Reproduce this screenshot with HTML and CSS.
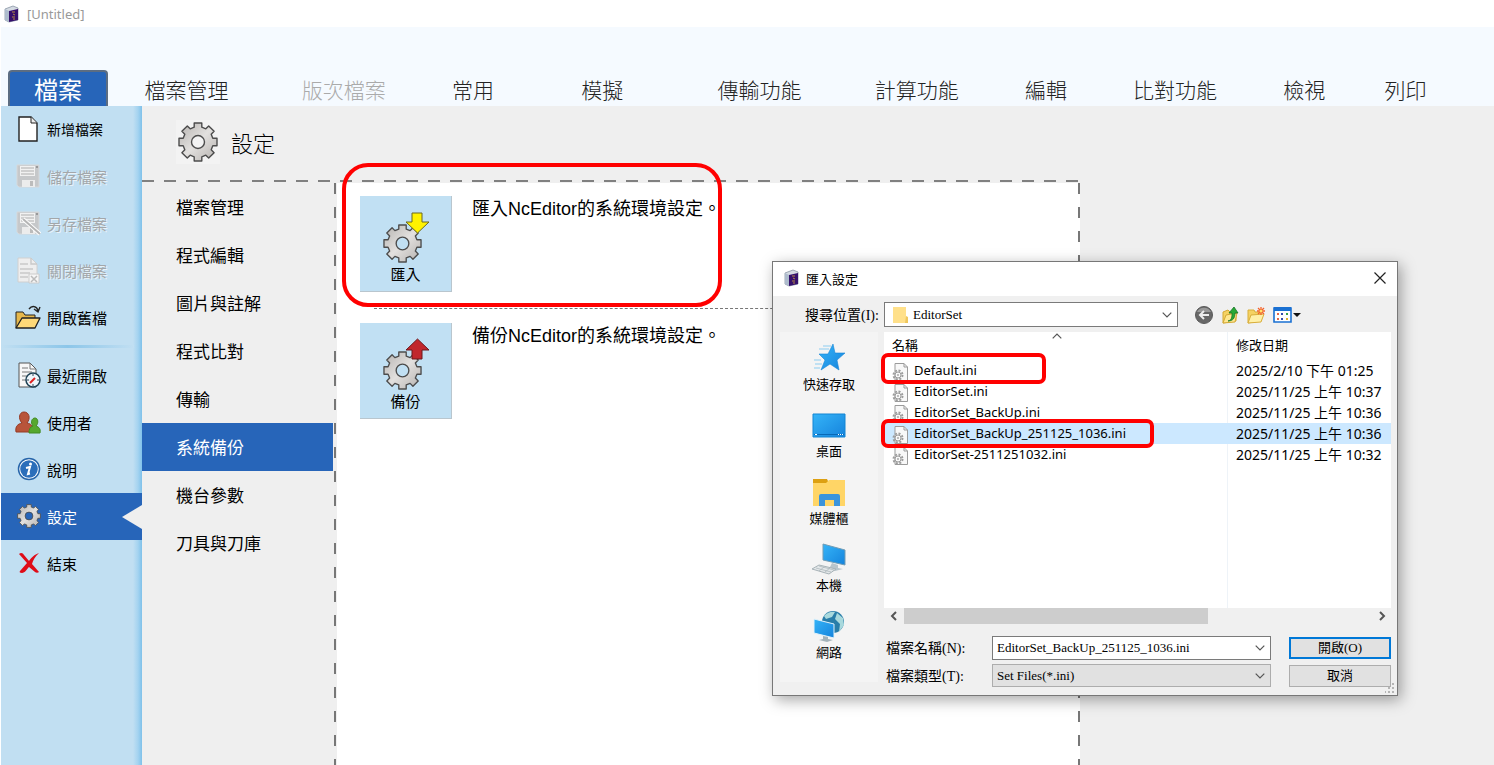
FILE: index.html
```html
<!DOCTYPE html>
<html lang="zh-Hant">
<head>
    <meta charset="UTF-8">
    <meta name="viewport" content="width=device-width, initial-scale=1.0">
    <title>[Untitled]</title>
    <link rel="stylesheet" href="styles.css">
</head>
<body>

    <!-- shared icons -->
    <svg class="defs" aria-hidden="true">
        <defs>
            <linearGradient id="metal" x1="0" y1="0" x2="1" y2="1">
                <stop offset="0" stop-color="#b5b2af"/>
                <stop offset=".5" stop-color="#e2e0de"/>
                <stop offset="1" stop-color="#b5b1ae"/>
            </linearGradient>
            <linearGradient id="sky" x1="0" y1="0" x2="1" y2="1">
                <stop offset="0" stop-color="#35b4f8"/>
                <stop offset="1" stop-color="#1583dc"/>
            </linearGradient>
        </defs>
        <symbol id="gear" viewBox="-20 -20 40 40">
            <path fill="url(#metal)" stroke="#4d4d4d" stroke-width="1.4" stroke-linejoin="round" fill-rule="evenodd" d="M-3.8-14.8V-19H3.800V-14.800L7.800-13.200L10.700-16.100L16.100-10.700L13.200-7.800L14.800-3.800H19V3.800H14.800L13.200 7.800L16.100 10.700L10.700 16.100L7.800 13.200L3.800 14.800V19H-3.800V14.800L-7.800 13.200L-10.700 16.100L-16.100 10.700L-13.200 7.800L-14.800 3.800H-19V-3.800H-14.800L-13.200-7.800L-16.100-10.700L-10.700-16.100L-7.800-13.200ZM6.500 0A6.500 6.500 0 1 0-6.500 0A6.500 6.500 0 1 0 6.500 0Z"/>
        </symbol>
        <symbol id="book" viewBox="0 0 16 18">
            <path d="M1 4L9 1l5 2v12l-9 2-4-2z" fill="#d5dbe3" stroke="#8894a3" stroke-width=".8"/>
            <path d="M1 4l4 2v11l-4-2z" fill="#aebccd"/>
            <path d="M5 6l9-2v11l-9 2z" fill="#35106b"/>
            <path d="M8 7h3M9 9l2 1M8 12h3M9 14h2" stroke="#b48a45" stroke-width="1"/>
        </symbol>
        <symbol id="chevron" viewBox="0 0 10 6">
            <path d="M.7.7L5 5 9.300.7" fill="none" stroke="#555" stroke-width="1.2"/>
        </symbol>
        <symbol id="disk" viewBox="0 0 24 24">
            <path d="M1 1h22v22H3l-2-2z" fill="#c6c8ca" stroke="#d6d8da"/>
            <path d="M4 2h15v10H4z" fill="#f1f1f1"/>
            <path d="M5 4h13M5 7h13M5 10h13" stroke="#adadad"/>
            <path d="M6 16h13v7H6z" fill="#ececec"/>
            <path d="M14 17h3v5h-3z" fill="#bcbcbc"/>
            <circle cx="21" cy="3" r="1" fill="#888"/>
        </symbol>
        <symbol id="ini" viewBox="0 0 16 18">
            <path d="M3 .5h9l3.500 3.500v13.500H3z" fill="#f8f8f8" stroke="#9b9b9b"/>
            <path d="M12 .5V4h3.500" fill="none" stroke="#9b9b9b"/>
            <circle cx="6" cy="12" r="4.500" fill="none" stroke="#9c9c9c" stroke-width="2" stroke-dasharray="2 1.530"/>
            <circle cx="6" cy="12" r="3" fill="#f8f8f8" stroke="#9c9c9c"/>
            <circle cx="6" cy="12" r="1" fill="#aaa"/>
        </symbol>
    </svg>

    <header class="titlebar">
        <svg class="book-icon"><use href="#book"/></svg>
        <span>[Untitled]</span>
    </header>

    <nav class="ribbon">
        <button class="tab file-tab">檔案</button>
        <button class="tab wide">檔案管理</button>
        <button class="tab wide" disabled>版次檔案</button>
        <button class="tab">常用</button>
        <button class="tab wide">模擬</button>
        <button class="tab wide">傳輸功能</button>
        <button class="tab wide">計算功能</button>
        <button class="tab">編輯</button>
        <button class="tab wide">比對功能</button>
        <button class="tab">檢視</button>
        <button class="tab">列印</button>
    </nav>

    <div class="workspace">
        <nav class="sidebar">
            <button class="side-item small">
                <svg class="side-icon" viewBox="0 0 26 28"><path d="M4 2h12l6 6v18H4z" fill="#fff" stroke="#222" stroke-width="1.400"/><path d="M16 2v6h6" fill="#eee" stroke="#222"/></svg>
                新增檔案
            </button>
            <button class="side-item" disabled>
                <svg class="side-icon" viewBox="0 0 26 26"><use href="#disk" x="1" y="1" width="24" height="24"/></svg>
                儲存檔案
            </button>
            <button class="side-item" disabled>
                <svg class="side-icon" viewBox="0 0 26 26"><use href="#disk" x="1" y="1" width="24" height="24"/><path d="M8 9l17 15" stroke="#fff" stroke-width="4"/><path d="M8 9l17 15" stroke="#b5b5b5" stroke-width="2"/></svg>
                另存檔案
            </button>
            <button class="side-item" disabled>
                <svg class="side-icon" viewBox="0 0 26 28"><path d="M3 2h13l6 6v18H3z" fill="#eee" stroke="#d0d0d0"/><path d="M16 2v6h6M5 8h8M5 13h13M5 17h10M5 21h8" fill="none" stroke="#c9c9c9" stroke-width="1.400"/><path d="M14 18h10v9H14z" fill="#f6f6f6" stroke="#ccc"/><path d="M16 20l6 6M22 20l-6 6" stroke="#bbb" stroke-width="1.500"/></svg>
                關閉檔案
            </button>
            <button class="side-item">
                <svg class="side-icon" viewBox="0 0 26 26"><path d="M1 24V8h7l2 3h10v4" fill="#e6b84c" stroke="#222"/><path d="M1 24l6-10h18l-5 10z" fill="#ffd978" stroke="#222" stroke-linejoin="round" stroke-width="1.300"/><path d="M14 5c3-4 8-3 9 2M19 5l4 3 2-5" fill="none" stroke="#222" stroke-width="1.400"/></svg>
                開啟舊檔
            </button>
            <hr class="side-line">
            <button class="side-item">
                <svg class="side-icon" viewBox="0 0 26 28"><path d="M4 2h11l6 6v18H4z" fill="#f7f7f7" stroke="#555"/><path d="M15 2v6h6M7 7h6M7 11h10M7 15h5M7 19h4" fill="none" stroke="#777"/><circle cx="18" cy="19" r="7" fill="#eef6fb" stroke="#1f4255" stroke-width="1.500"/><path d="M15 22l5-5" stroke="#d22" stroke-width="2"/><path d="M18 13v2M24 19h-2M12 19h2M18 25v-2" stroke="#345"/></svg>
                最近開啟
            </button>
            <button class="side-item">
                <svg class="side-icon" viewBox="0 0 26 26"><path d="M1 23c-1-6 2-8 6-9-4-4-3-11 2-11s7 6 3 11c5 1 7 4 6 9z" fill="#b8543a" stroke="#963a25"/><path d="M14 24c0-4 1-6 4-7-3-4-1-8 2-8s4 5 1 8c3 1 5 3 4 7z" fill="#56a82e" stroke="#438b22"/></svg>
                使用者
            </button>
            <button class="side-item">
                <svg class="side-icon" viewBox="0 0 26 26"><circle cx="14" cy="13" r="10.500" fill="#fff" stroke="#2765aa" stroke-width="1.500"/><circle cx="14" cy="13" r="8.800" fill="#2b6eba"/><circle cx="15.500" cy="8" r="1.500" fill="#fff"/><path d="M11 12l4-1-2 7 2-.5" fill="none" stroke="#fff" stroke-width="2"/></svg>
                說明
            </button>
            <button class="side-item active">
                <svg class="side-icon" viewBox="0 0 26 26"><use href="#gear" x="2" y="1" width="24" height="24"/></svg>
                設定
            </button>
            <button class="side-item">
                <svg class="side-icon" viewBox="0 0 26 26"><path d="M4 4c2-2 4-1 5 1l5 6c3-4 5-6 10-8-4 4-6 7-7 11l7 8c-1 1-3 1-4 0l-6-5c-2 2-4 6-7 6-2 0-3-1-2-2l7-8z" fill="#df0c18"/></svg>
                結束
            </button>
        </nav>

        <main class="settings">
            <div class="settings-head">
                <svg class="head-gear"><use href="#gear"/></svg>
                <h1>設定</h1>
            </div>
            <div class="settings-body">
                <nav class="submenu">
                    <a href="#">檔案管理</a>
                    <a href="#">程式編輯</a>
                    <a href="#">圖片與註解</a>
                    <a href="#">程式比對</a>
                    <a href="#">傳輸</a>
                    <a href="#" class="active">系統備份</a>
                    <a href="#">機台參數</a>
                    <a href="#">刀具與刀庫</a>
                </nav>
                <section class="panel">
                    <div class="option">
                        <button class="option-btn">
                            <svg class="option-icon" viewBox="0 0 48 52"><use href="#gear" x="1" y="13" width="39" height="39"/><path d="M30 2h10v9h7L35.500 22 24 11h6z" fill="#fff200" stroke="#6b6920"/></svg>
                            匯入
                        </button>
                        <p>匯入NcEditor的系統環境設定。</p>
                        <div class="mark mark-option"></div>
                    </div>
                    <div class="option">
                        <button class="option-btn">
                            <svg class="option-icon" viewBox="0 0 48 52"><use href="#gear" x="1" y="13" width="39" height="39"/><path d="M30 21h10v-9h7L35.500 1 24 12h6z" fill="#c1272d" stroke="#6c191c"/></svg>
                            備份
                        </button>
                        <p>備份NcEditor的系統環境設定。</p>
                    </div>
                </section>
            </div>
        </main>
    </div>

    <div class="dialog" role="dialog" aria-labelledby="dialogTitle">
        <div class="dialog-title">
            <svg class="book-icon"><use href="#book"/></svg>
            <span id="dialogTitle">匯入設定</span>
            <button class="close-btn" aria-label="關閉"><svg viewBox="0 0 12 12"><path d="M.5.5l11 11M11.500.5l-11 11" stroke="#222" stroke-width="1.200"/></svg></button>
        </div>

        <div class="lookup">
            <label for="folder">搜尋位置(I):</label>
            <div class="combo folder-combo">
                <select id="folder"><option>EditorSet</option></select>
                <svg class="combo-folder" viewBox="0 0 16 18"><path d="M1 1h13v16H1z" fill="#ffe08a"/><path d="M14 10l2 1v6h-3z" fill="#efc75e"/></svg>
                <svg class="combo-arrow"><use href="#chevron"/></svg>
            </div>
            <div class="tools">
                <button aria-label="返回"><svg viewBox="0 0 20 20"><circle cx="10" cy="10" r="8.500" fill="#676767" stroke="#5a5a5a"/><path d="M3 7a8 8 0 0 1 14 0z" fill="#999"/><path d="M15 10H7M10 6l-4 4 4 4" fill="none" stroke="#eee" stroke-width="2"/></svg></button>
                <button aria-label="上一層"><svg viewBox="0 0 20 20"><path d="M3 7l5-2 2 2h6v9L3 18z" fill="#f5d263" stroke="#d4a935"/><path d="M3 18l3-8 11-2-2 9z" fill="#ffe891" stroke="#d4a935"/><path d="M8 16c4-1 4-4 4-8H9l5-6 4 6h-3c0 5-2 8-7 8z" fill="#28a936" stroke="#167324" stroke-width=".8"/></svg></button>
                <button aria-label="新增資料夾"><svg viewBox="0 0 20 20"><path d="M2 5h6l1 2h6v9L2 18z" fill="#f5d263" stroke="#d9ae3b"/><path d="M2 18l3-8 13-1-3 8z" fill="#fff0a8" stroke="#d9ae3b"/><path d="M15 2v8M11 6h8M12 3l6 6M18 3l-6 6" stroke="#f4622c" stroke-width="1.300"/><circle cx="15" cy="6" r="1.500" fill="#ffe26d"/></svg></button>
                <button class="view-btn" aria-label="檢視功能表"><svg viewBox="0 0 30 20"><path d="M2 3h17v14H2z" fill="#fff" stroke="#1a70d2" stroke-width="1.600"/><path d="M2 2h17v4H2z" fill="#1a70d2"/><path d="M5 8h2v2H5zM5 13h2v2H5z" fill="#e26749"/><path d="M9 8h2v2H9zM9 13h2v2H9z" fill="#344cac"/><path d="M14 8h2v2h-2z" fill="#35a048"/><path d="M14 13h2v2h-2z" fill="#dfaf2a"/><path d="M21 8h8l-4 4z" fill="#111"/></svg></button>
            </div>
        </div>

        <div class="dialog-main">
            <nav class="places">
                <button>
                    <svg viewBox="0 0 36 32"><path d="M22 2l2 9h10l-8 7 2 10-9-6-9 6 4-10-6-6h9z" fill="url(#sky)" stroke="#1685d7" stroke-width=".6"/><path d="M12 4h8M8 7h10M3 18h7M4 22h7M3 26h6" stroke="#8ccdf1"/></svg>
                    快速存取
                </button>
                <button>
                    <svg viewBox="0 0 36 32"><path d="M2 5h32v23H2z" fill="url(#sky)" stroke="#1285d3"/><path d="M3 25.500h30" stroke="#0869b6"/><path d="M4 25.500h2M27 25.500h1M29 25.500h1M31 25.500h1" stroke="#fff"/></svg>
                    桌面
                </button>
                <button>
                    <svg viewBox="0 0 36 32"><path d="M2 3h14l2 4H2z" fill="#dda012"/><path d="M2 7h13l3-3h16v26H2z" fill="#ffd566"/><path d="M8 30V20q0-2 2-2h17q2 0 2 2v10h-6v-6h-9v6z" fill="#3b94dc"/></svg>
                    媒體櫃
                </button>
                <button>
                    <svg viewBox="0 0 36 32"><path d="M12 1l22 6v15l-22-5z" fill="url(#sky)" stroke="#719cb5"/><path d="M21 20l6 2v3l5 1-8 2-6-2z" fill="#b9c5cc"/><path d="M1 26l7-4 17 4-7 5z" fill="#e3e7e9" stroke="#a8b3b8"/><path d="M5 25l15 4M8 23l15 4M8 28l5-4M14 29l5-4" stroke="#a8b3b8" stroke-width=".7"/></svg>
                    本機
                </button>
                <button>
                    <svg viewBox="0 0 36 32"><circle cx="22" cy="12" r="11" fill="#297da9"/><path d="M13 6q5-5 11-4l-3 5-6 2zM26 3l6 5 1 7-5 7 1-8-5-5z" fill="#a9d9dd"/><path d="M3 9l20 5v14L3 23z" fill="url(#sky)" stroke="#e2f2fa"/><path d="M12 26l5 1v2l5 1-6 2-8-2 4-1z" fill="#a4b3ba"/></svg>
                    網路
                </button>
            </nav>

            <div class="files">
                <div class="file-list">
                    <table>
                        <thead>
                            <tr><th>名稱<svg class="sort-arrow"><use href="#chevron"/></svg></th><th class="date">修改日期</th></tr>
                        </thead>
                        <tbody>
                            <tr><td><svg><use href="#ini"/></svg>Default.ini</td><td class="date">2025/2/10 下午 01:25</td></tr>
                            <tr><td><svg><use href="#ini"/></svg>EditorSet.ini</td><td class="date">2025/11/25 上午 10:37</td></tr>
                            <tr><td><svg><use href="#ini"/></svg>EditorSet_BackUp.ini</td><td class="date">2025/11/25 上午 10:36</td></tr>
                            <tr class="selected"><td><svg><use href="#ini"/></svg>EditorSet_BackUp_251125_1036.ini</td><td class="date">2025/11/25 上午 10:36</td></tr>
                            <tr><td><svg><use href="#ini"/></svg>EditorSet-2511251032.ini</td><td class="date">2025/11/25 上午 10:32</td></tr>
                        </tbody>
                    </table>
                    <div class="mark mark-default"></div>
                    <div class="mark mark-backup"></div>
                </div>
                <div class="scrollbar">
                    <svg viewBox="0 0 8 10"><path d="M6 1L2 5l4 4" fill="none" stroke="#555" stroke-width="2"/></svg>
                    <div class="track"><div class="thumb"></div></div>
                    <svg viewBox="0 0 8 10"><path d="M2 1l4 4-4 4" fill="none" stroke="#555" stroke-width="2"/></svg>
                </div>
                <form class="fields">
                    <label for="fileName">檔案名稱(N):</label>
                    <div class="combo">
                        <input type="text" id="fileName" value="EditorSet_BackUp_251125_1036.ini">
                        <svg class="combo-arrow"><use href="#chevron"/></svg>
                    </div>
                    <button type="button" class="dialog-btn primary">開啟(O)</button>
                    <label for="fileType">檔案類型(T):</label>
                    <div class="combo">
                        <select id="fileType" class="gray"><option>Set Files(*.ini)</option></select>
                        <svg class="combo-arrow"><use href="#chevron"/></svg>
                    </div>
                    <button type="button" class="dialog-btn">取消</button>
                </form>
            </div>
        </div>
        <svg class="grip" viewBox="0 0 10 10"><path d="M7 0h2v2H7zM7 4h2v2H7zM3 4h2v2H3zM7 8h2v2H7zM3 8h2v2H3zM0 8h1v2H0z" fill="#b5b5b5"/></svg>
    </div>

</body>
</html>
```
FILE: styles.css
```css
* {
    box-sizing: border-box;
}
body {
    font-family: "Liberation Sans", "Noto Sans CJK TC", sans-serif;
    margin: 0;
    min-height: 100vh;
    display: flex;
    flex-direction: column;
    background-color: #fff;
    color: #000;
    position: relative;
    overflow: hidden;
}
button, input, select {
    font: inherit;
    color: inherit;
    margin: 0;
}
button {
    border: none;
    background: none;
    padding: 0;
}
.defs {
    position: absolute;
    width: 0;
    height: 0;
}
.book-icon {
    width: 16px;
    height: 18px;
}

/* title bar and ribbon */
.titlebar {
    display: flex;
    align-items: center;
    gap: 7px;
    height: 27px;
    padding-left: 4px;
    font-family: "Noto Sans", sans-serif;
    font-size: 13px;
    color: #999;
}
.ribbon {
    display: flex;
    align-items: flex-end;
    height: 79px;
    margin-left: 1px;
    padding: 0 38px 0 7px;
    background-color: #f5faff;
}
.tab {
    flex: 101;
    height: 36px;
    padding-top: 5px;
    font-size: 21px;
    line-height: 30px;
    font-weight: 300;
    white-space: nowrap;
    color: #222;
}
.tab.wide {
    flex: 157;
}
.tab:disabled {
    color: #aaa;
}
.tab.file-tab {
    flex: 0 0 100px;
    padding-top: 3px;
    background-color: #2765b9;
    color: #fff;
    font-size: 24px;
    font-weight: 400;
    border: 2px solid #5c6d82;
    border-bottom: none;
    border-radius: 4px 4px 0 0;
}

/* left menu */
.workspace {
    flex: 1;
    display: flex;
    margin-left: 1px;
}
.sidebar {
    flex: 0 0 141px;
    background: linear-gradient(to right, #c1dff2 132px, #a4d3f0 137px, #7fc1ea);
}
.side-item {
    position: relative;
    display: flex;
    align-items: center;
    gap: 6px;
    width: 100%;
    height: 47px;
    padding-left: 14px;
    padding-bottom: 1px;
    font-size: 15px;
    white-space: nowrap;
}
.side-item.small {
    font-size: 14px;
}
.side-item:disabled {
    color: #a3a7aa;
    text-shadow: 1px 1px 0 #e8f2f9;
}
.side-item.active {
    background-color: #2765b9;
    color: #fff;
}
.side-item.active::after {
    content: "";
    position: absolute;
    right: 0;
    top: 12px;
    border: 12px solid transparent;
    border-left: none;
    border-right: 20px solid #efefef;
}
.side-icon {
    width: 26px;
    height: 28px;
}
.side-line {
    height: 3px;
    margin: 4px 8px 4px 0;
    border: none;
    background: linear-gradient(to right, #c1dff2, #8cc6e9 50%, #c1dff2);
}

/* settings page */
.settings {
    flex: 1;
    display: flex;
    flex-direction: column;
    background-color: #efefef;
}
.settings-head {
    display: flex;
    align-items: center;
    gap: 11px;
    height: 74px;
    padding-left: 34px;
    padding-bottom: 3px;
}
.head-gear {
    width: 44px;
    height: 44px;
    padding: 2px;
    background-color: #f3f3f3;
}
.settings-head h1 {
    margin: 0;
    font-size: 22px;
    font-weight: 300;
}
.settings-body {
    flex: 1;
    display: flex;
    width: 938px;
    max-width: 100%;
    padding-top: 3px;
    background: repeating-linear-gradient(to right, #808080 0 12px, transparent 12px 22px) top / 100% 2px no-repeat;
}
.submenu {
    flex: 0 0 195px;
    padding-right: 4px;
    background: repeating-linear-gradient(to bottom, #777 0 11px, transparent 11px 24px) right 1px top / 2px 100% no-repeat;
}
.submenu a {
    display: flex;
    align-items: center;
    height: 48px;
    padding-left: 34px;
    padding-bottom: 2px;
    font-size: 17px;
    color: #000;
    text-decoration: none;
}
.submenu a.active {
    background-color: #2765b9;
    color: #fff;
}
.panel {
    flex: 1;
    padding: 0 1px 0 23px;
    background: repeating-linear-gradient(to bottom, #777 0 11px, transparent 11px 24px) right top / 2px 100% no-repeat, #fff;
}
.option {
    position: relative;
    display: flex;
    align-items: flex-start;
    gap: 20px;
    height: 127px;
    padding-top: 13px;
}
.option:first-child::after {
    content: "";
    position: absolute;
    left: 14px;
    right: 15px;
    bottom: 1px;
    border-bottom: 1px dashed #777;
}
.option-btn {
    display: flex;
    flex-direction: column;
    align-items: center;
    width: 92px;
    height: 96px;
    padding-top: 15px;
    font-size: 15px;
    line-height: 24px;
    background-color: #c1e0f3;
    border-right: 1px solid #b9c6ce;
    border-bottom: 1px solid #b9c6ce;
}
.option-icon {
    width: 48px;
    height: 52px;
}
.option p {
    margin: 0;
    font-size: 18px;
    line-height: 26px;
    white-space: nowrap;
}

/* red marks drawn over the page */
.mark {
    position: absolute;
    border: 4px solid #f00;
    pointer-events: none;
}
.mark-option {
    left: -18px;
    top: -20px;
    width: 380px;
    height: 144px;
    border-radius: 26px;
    z-index: 1;
}
.mark-default {
    left: -3px;
    top: 21px;
    width: 165px;
    height: 31px;
    border-radius: 7px;
}
.mark-backup {
    left: -3px;
    top: 87px;
    width: 273px;
    height: 29px;
    border-radius: 7px;
}

/* open file dialog */
.dialog {
    position: absolute;
    left: 772px;
    top: 261px;
    z-index: 2;
    width: 626px;
    background-color: #f0f0f0;
    border: 1px solid #777;
    box-shadow: 3px 4px 14px rgba(0, 0, 0, 0.35);
    font-family: "Liberation Serif", "Noto Sans CJK TC", serif;
    font-size: 13px;
}
.dialog-title {
    display: flex;
    align-items: center;
    gap: 6px;
    height: 34px;
    padding: 0 11px 2px;
    background-color: #fff;
}
.close-btn {
    margin-left: auto;
    display: flex;
}
.close-btn svg {
    width: 12px;
    height: 12px;
}
.lookup {
    display: flex;
    align-items: center;
    padding: 6px 0 5px 32px;
}
.lookup label {
    flex: 0 0 79px;
    padding-bottom: 2px;
    font-size: 14px;
}
.combo {
    display: grid;
    grid-template-columns: 1fr 20px;
    align-items: center;
}
.combo select, .combo input {
    grid-area: 1 / 1 / 2 / 3;
    appearance: none;
    width: 100%;
    height: 24px;
    padding: 0 22px 1px 4px;
    border: 1px solid #7a7a7a;
    border-radius: 0;
    background-color: #fff;
    outline: none;
}
.combo select.gray {
    height: 23px;
    background-color: #e1e1e1;
    border-color: #adadad;
}
.folder-combo {
    width: 294px;
}
.folder-combo select {
    height: 25px;
    padding-left: 28px;
}
.combo-folder {
    grid-area: 1 / 1;
    width: 16px;
    height: 18px;
    margin-left: 8px;
    pointer-events: none;
}
.combo-arrow {
    grid-area: 1 / 2;
    width: 10px;
    height: 6px;
    margin-left: 4px;
    pointer-events: none;
}
.tools {
    display: flex;
    gap: 6px;
    margin-left: 16px;
}
.tools button, .tools svg {
    display: block;
    width: 20px;
    height: 20px;
}
.tools .view-btn, .tools .view-btn svg {
    width: 30px;
}
.dialog-main {
    display: flex;
    gap: 6px;
    padding: 0 6px 8px 7px;
}
.places {
    flex: 0 0 98px;
    margin-bottom: 5px;
    padding-top: 10px;
    background-color: #f4f4f4;
}
.places button {
    display: flex;
    flex-direction: column;
    align-items: center;
    width: 100%;
    height: 67px;
    line-height: 22px;
}
.places svg {
    width: 36px;
    height: 32px;
}
.files {
    flex: 1;
}
.file-list {
    position: relative;
    height: 276px;
    background: linear-gradient(#eef3f8, #eef3f8) 343px 0 / 1px 100% no-repeat, #fff;
    font-family: "Noto Sans", "Noto Sans CJK TC", sans-serif;
}
.file-list table {
    width: 100%;
    border-collapse: collapse;
    table-layout: fixed;
}
.file-list th {
    height: 28px;
    padding: 0 8px 4px;
    text-align: left;
    font-weight: 400;
}
.file-list th.date {
    width: 163px;
}
.file-list td {
    height: 21px;
    padding: 0 8px;
    line-height: 20px;
    white-space: nowrap;
}
.file-list td.date {
    padding-right: 0;
    font-size: 14px;
}
.file-list td svg {
    width: 16px;
    height: 18px;
    margin-right: 6px;
    vertical-align: middle;
}
.file-list .selected {
    background-color: #cce8ff;
}
.sort-arrow {
    position: absolute;
    left: 168px;
    top: 1px;
    width: 10px;
    height: 6px;
    transform: rotate(180deg);
}
.scrollbar {
    display: flex;
    align-items: center;
    gap: 6px;
    height: 16px;
    padding: 0 5px 0 6px;
}
.scrollbar svg {
    width: 8px;
    height: 10px;
}
.track {
    flex: 1;
    height: 16px;
}
.thumb {
    width: 65%;
    height: 100%;
    background-color: #cdcdcd;
}
.fields {
    display: grid;
    grid-template-columns: 108px 1fr 120px;
    row-gap: 4px;
    align-items: center;
    margin-top: 12px;
}
.fields label {
    padding-left: 2px;
    padding-bottom: 2px;
    font-size: 14px;
}
.dialog-btn {
    width: 102px;
    height: 22px;
    margin-left: 18px;
    line-height: 18px;
    background-color: #e1e1e1;
    border: 1px solid #adadad;
}
.dialog-btn.primary {
    border: 2px solid #0078d7;
}
.grip {
    position: absolute;
    right: 2px;
    bottom: 2px;
    width: 10px;
    height: 10px;
}
```
